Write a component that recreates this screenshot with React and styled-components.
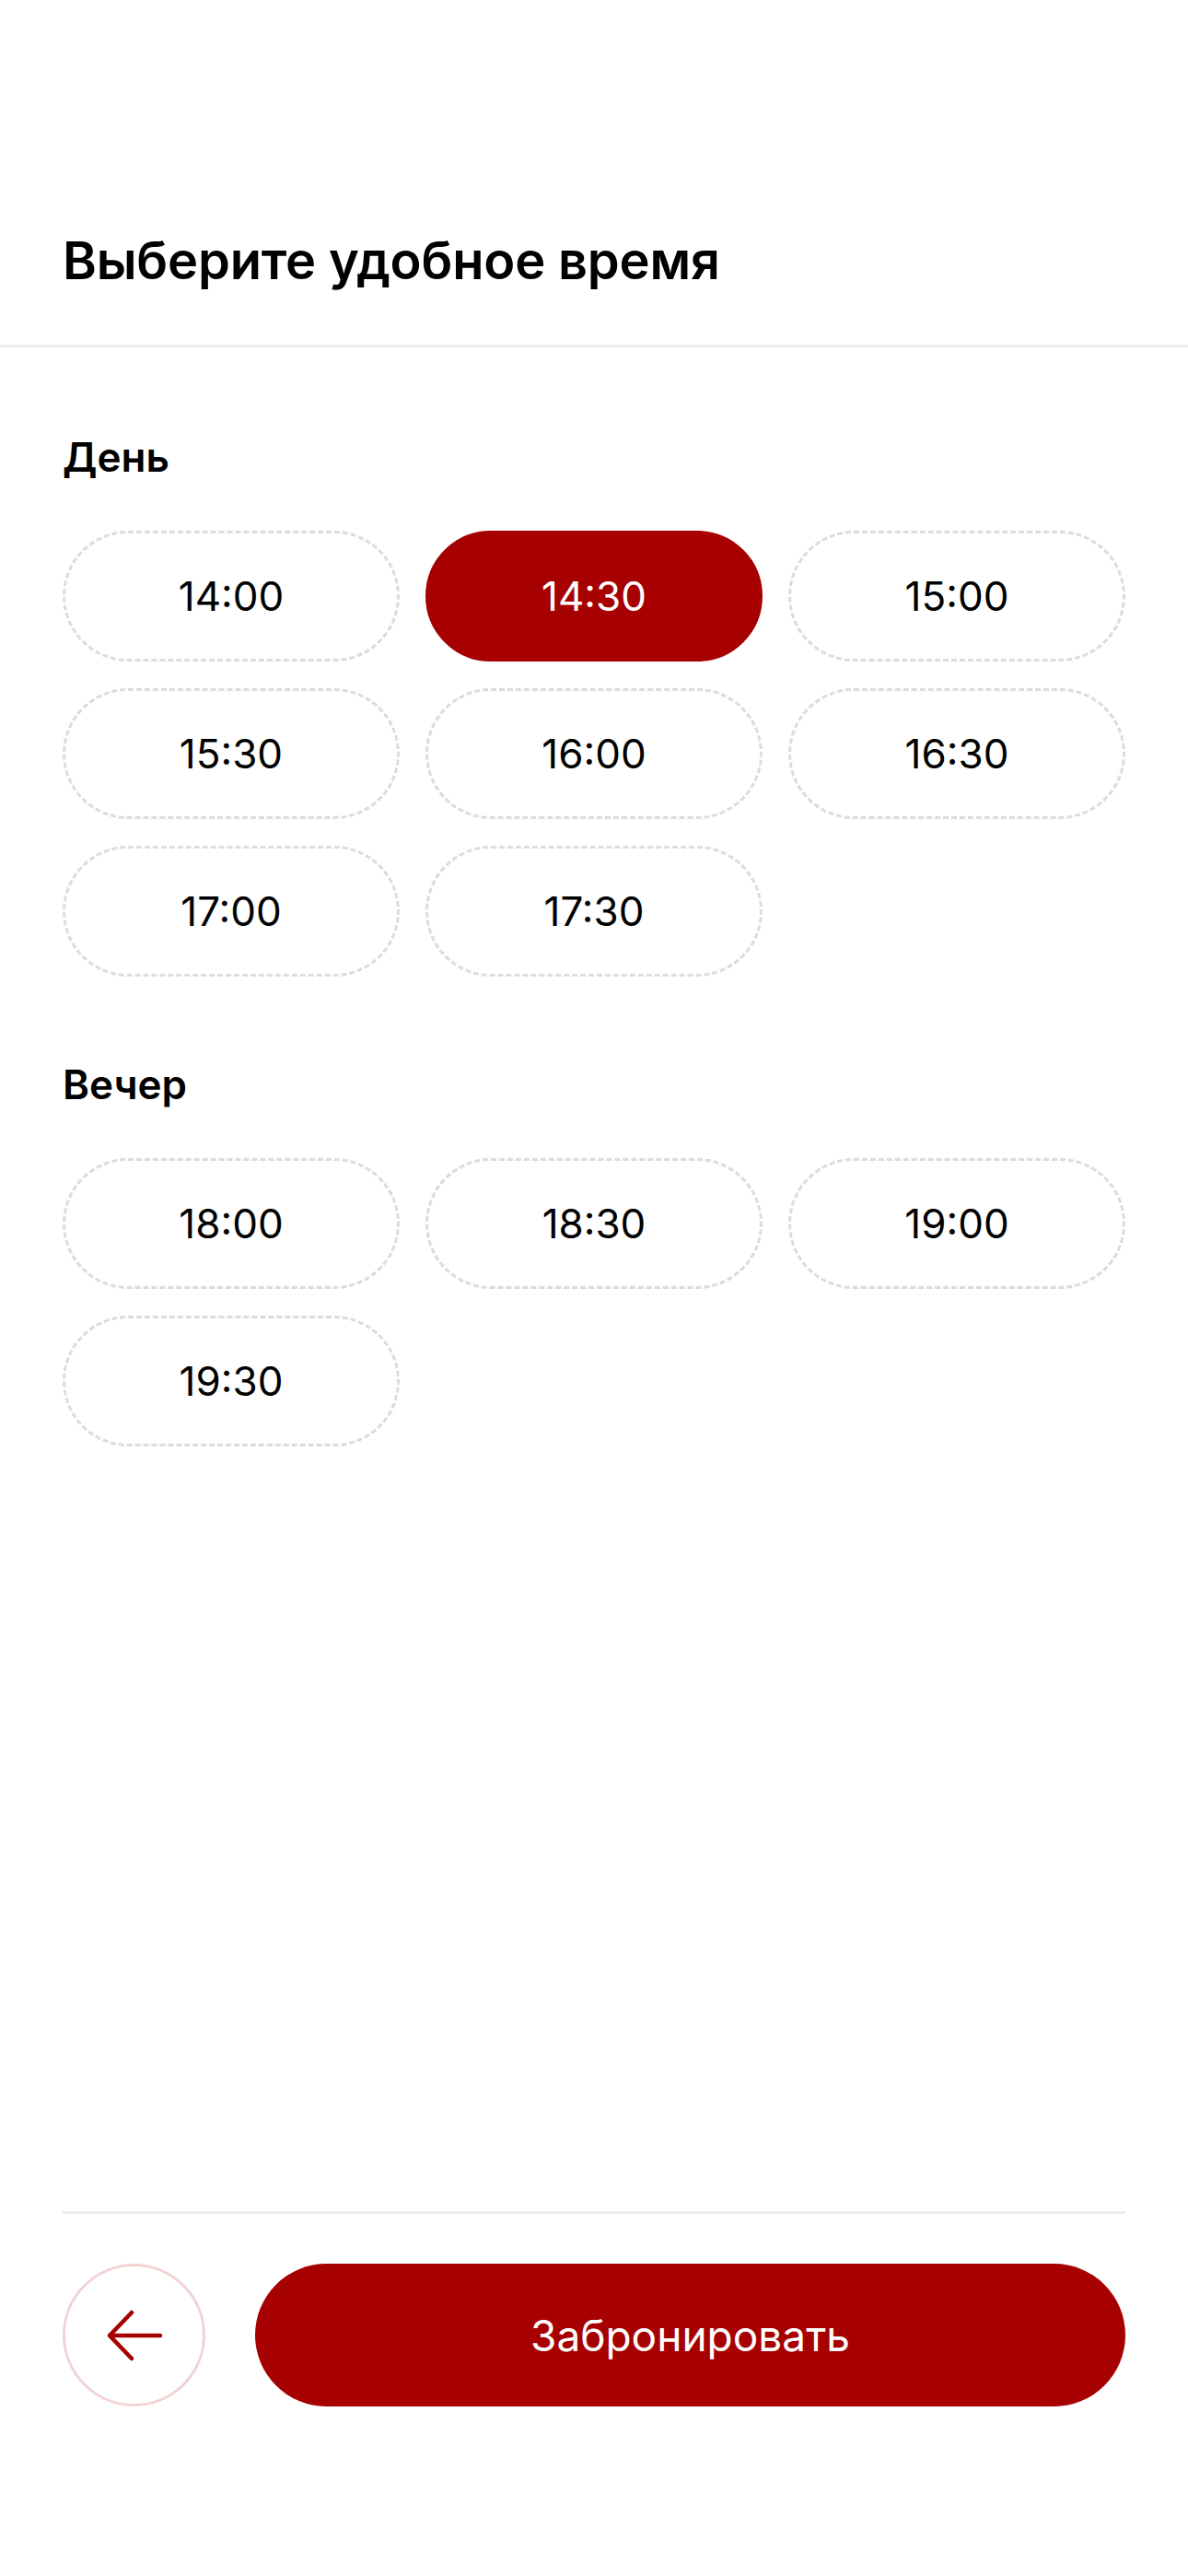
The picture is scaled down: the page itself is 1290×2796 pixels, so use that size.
import React, { useState } from 'react';
import styled, { createGlobalStyle } from 'styled-components';

const GlobalStyle = createGlobalStyle`
  * { box-sizing: border-box; }
  html, body {
    margin: 0;
    padding: 0;
    background: #fff;
    font-family: Inter, "Noto Sans", "Liberation Sans", sans-serif;
    color: #000;
  }
`;

const Screen = styled.div`
  display: flex;
  flex-direction: column;
  min-height: 2796px;
  width: 1290px;
  background: #fff;
`;

const Header = styled.header`
  padding: 248px 68px 56px;
  border-bottom: 3px solid #ebebeb;
`;

const Title = styled.h1`
  margin: 0;
  font-size: 56px;
  line-height: 70px;
  font-weight: 600;
  letter-spacing: -0.2px;
`;

const Content = styled.main`
  flex: 1;
  padding: 92px 68px 0;
`;

const Section = styled.section`
  margin-bottom: 90px;
`;

const SectionTitle = styled.h2`
  margin: 0 0 53px;
  font-size: 44px;
  line-height: 54px;
  font-weight: 600;
`;

const Grid = styled.div`
  display: grid;
  grid-template-columns: repeat(3, 1fr);
  column-gap: 28px;
  row-gap: 29px;
`;

const Slot = styled.button`
  height: 142px;
  border-radius: 71px;
  border: 3px ${p => (p.$active ? 'solid #a60000' : 'dashed #dcdcdc')};
  background: ${p => (p.$active ? '#a60000' : '#fff')};
  color: ${p => (p.$active ? '#fff' : '#000')};
  font-family: inherit;
  font-size: 44px;
  font-weight: 400;
  cursor: pointer;
  padding: 0;
`;

const Footer = styled.footer`
  padding: 0 68px 184px;
`;

const Divider = styled.div`
  height: 3px;
  background: #ebebeb;
  margin-bottom: 54px;
`;

const Actions = styled.div`
  display: flex;
  align-items: center;
  gap: 54px;
`;

const BackButton = styled.button`
  flex: none;
  width: 155px;
  height: 155px;
  border-radius: 50%;
  border: 3px solid #f0d3d3;
  background: #fff;
  display: flex;
  align-items: center;
  justify-content: center;
  padding: 0;
  cursor: pointer;
`;

const BookButton = styled.button`
  flex: 1;
  height: 155px;
  border: none;
  border-radius: 78px;
  background: #a60000;
  color: #fff;
  font-family: inherit;
  font-size: 46px;
  font-weight: 400;
  cursor: pointer;
`;

const groups = [
  { title: 'День', slots: ['14:00', '14:30', '15:00', '15:30', '16:00', '16:30', '17:00', '17:30'] },
  { title: 'Вечер', slots: ['18:00', '18:30', '19:00', '19:30'] },
];

function ArrowLeft() {
  return (
    <svg width="62" height="56" viewBox="0 0 62 56" fill="none">
      <path
        d="M59 28H4M28 3L4 28L28 53"
        stroke="#a60000"
        strokeWidth="4.5"
        strokeLinecap="round"
        strokeLinejoin="round"
      />
    </svg>
  );
}

export default function App() {
  const [selected, setSelected] = useState('14:30');

  return (
    <Screen>
      <GlobalStyle />
      <Header>
        <Title>Выберите удобное время</Title>
      </Header>
      <Content>
        {groups.map(g => (
          <Section key={g.title}>
            <SectionTitle>{g.title}</SectionTitle>
            <Grid>
              {g.slots.map(s => (
                <Slot key={s} $active={s === selected} onClick={() => setSelected(s)}>
                  {s}
                </Slot>
              ))}
            </Grid>
          </Section>
        ))}
      </Content>
      <Footer>
        <Divider />
        <Actions>
          <BackButton aria-label="Назад">
            <ArrowLeft />
          </BackButton>
          <BookButton>Забронировать</BookButton>
        </Actions>
      </Footer>
    </Screen>
  );
}
